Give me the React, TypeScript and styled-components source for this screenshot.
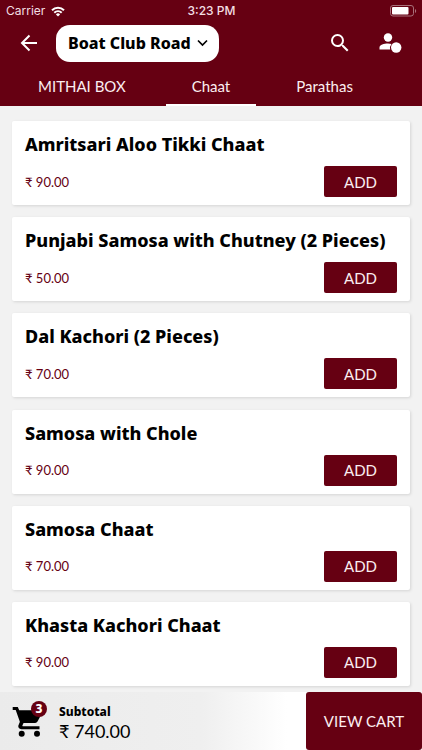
import React from "react";
import styled, { createGlobalStyle } from "styled-components";

const maroon = "#660012";
const textFont = '"Lato", "Open Sans", sans-serif';
const boldFont = '"Noto Sans", "Open Sans", sans-serif';

const GlobalStyle = createGlobalStyle`
  *, *::before, *::after { box-sizing: border-box; }
  body { margin: 0; background: #f2f2f2; font-family: ${textFont}; color: #000; }
  button { font: inherit; border: 0; padding: 0; cursor: pointer; }
  svg { display: block; }
`;

const Screen = styled.div`
  min-height: 100vh;
  display: flex;
  flex-direction: column;
`;

const Header = styled.header`
  position: sticky;
  top: 0;
  z-index: 1;
  background: ${maroon};
  color: #fff;
`;

const StatusBar = styled.div`
  display: grid;
  grid-template-columns: 1fr auto 1fr;
  align-items: center;
  height: 20px;
  padding: 2px 5px 0 6px;
  font: 400 12px/18px "Inter", sans-serif;
  color: #f3dfe2;
`;

const Carrier = styled.span`
  display: flex;
  align-items: center;
  gap: 6px;
`;

const Clock = styled.time`
  font-weight: 500;
`;

const Battery = styled.span`
  justify-self: end;
`;

const Toolbar = styled.div`
  display: flex;
  align-items: center;
  height: 46px;
  padding: 0 20px;
`;

const IconButton = styled.button`
  background: none;
  color: #fff;
`;

const Actions = styled.div`
  display: flex;
  gap: 26px;
  margin-left: auto;
`;

const LocationButton = styled.button`
  display: flex;
  align-items: center;
  gap: 6px;
  height: 37px;
  margin-left: 18px;
  && { padding: 0 11px 0 12px; }
  border-radius: 14px;
  background: #fff;
  color: #000;
  font: 800 16px/20px ${boldFont};
  white-space: nowrap;
`;

const Tabs = styled.nav`
  display: flex;
  gap: 14px;
  height: 40px;
  padding-left: 12px;
  overflow: hidden;
`;

const Tab = styled.button<{ $active?: boolean }>`
  && {
    padding: 0 26px;
    border-top: 2px solid transparent;
    border-bottom: 2px solid ${(p) => (p.$active ? "#fff" : "transparent")};
  }
  background: none;
  color: #fbeef0;
  font: 400 15px/20px ${textFont};
  white-space: nowrap;
`;

const Menu = styled.main`
  flex: 1;
  display: flex;
  flex-direction: column;
  justify-content: space-between;
  gap: 12px;
  padding: 15px 12px 6px;
`;

const Card = styled.article`
  padding: 11px 13px 8px;
  border-radius: 2px;
  background: #fff;
  box-shadow: 1px 1px 3px rgba(0, 0, 0, 0.12);
`;

const ItemName = styled.h2`
  margin: 0;
  font: 800 18px/24px ${boldFont};
`;

const CardRow = styled.div`
  display: flex;
  align-items: center;
  justify-content: space-between;
  margin-top: 10px;
`;

const Price = styled.span`
  color: ${maroon};
  font: 400 13px/20px ${textFont};
`;

const AddButton = styled.button`
  width: 73px;
  height: 31px;
  border-radius: 2px;
  background: ${maroon};
  color: #fbeef0;
  font: 400 15px/20px ${textFont};
`;

const CartBar = styled.footer`
  position: sticky;
  bottom: 0;
  display: flex;
  align-items: center;
  height: 58px;
  padding-left: 12px;
  background: linear-gradient(90deg, #ebebeb 0%, #efefef 48%, #fff 68%);
`;

const CartIcon = styled.div`
  position: relative;
  width: 32px;
`;

const Badge = styled.span`
  position: absolute;
  top: -4px;
  right: -3px;
  width: 16px;
  height: 16px;
  border-radius: 50%;
  background: ${maroon};
  color: #fff;
  font: 800 12px/16px ${boldFont};
  text-align: center;
`;

const Totals = styled.div`
  display: flex;
  flex-direction: column;
  padding-top: 2px;
  margin-left: 15px;
`;

const TotalLabel = styled.div`
  font: 800 12px/17px ${boldFont};
`;

const Total = styled.div`
  font: 400 18px/22px ${textFont};
`;

const ViewCart = styled.button`
  align-self: stretch;
  width: 116px;
  margin-left: auto;
  border-radius: 3px;
  background: ${maroon};
  color: #fbeef0;
  font: 400 15px/20px ${textFont};
`;

const items = [
  { name: "Amritsari Aloo Tikki Chaat", price: "90.00" },
  { name: "Punjabi Samosa with Chutney (2 Pieces)", price: "50.00" },
  { name: "Dal Kachori (2 Pieces)", price: "70.00" },
  { name: "Samosa with Chole", price: "90.00" },
  { name: "Samosa Chaat", price: "70.00" },
  { name: "Khasta Kachori Chaat", price: "90.00" },
];

export default function App() {
  return (
    <>
      <GlobalStyle />
      <Screen>
        <Header>
          <StatusBar>
            <Carrier>
              Carrier
              <svg width="14" height="11" viewBox="0 0 14 11" fill="none" stroke="#fff" strokeWidth="2">
                <path d="M1 4.2a8.6 8.6 0 0 1 12 0M3.3 6.7a5.3 5.3 0 0 1 7.4 0" />
                <path d="M7 10.5 4.9 8.4a3 3 0 0 1 4.2 0z" fill="#fff" stroke="none" />
              </svg>
            </Carrier>
            <Clock>3:23 PM</Clock>
            <Battery>
              <svg width="27" height="12" viewBox="0 0 27 12">
                <rect x="0.5" y="0.5" width="23" height="10.5" rx="2.5" fill="none" stroke="#a8707a" />
                <rect x="2" y="2" width="16.5" height="7.5" rx="1" fill="#fff" />
                <path d="M25 4v4c1.6-.7 1.6-3.3 0-4z" fill="#a8707a" />
              </svg>
            </Battery>
          </StatusBar>
          <Toolbar>
            <IconButton aria-label="Back">
              <svg width="18" height="18" viewBox="0 0 18 18" fill="none" stroke="currentColor" strokeWidth="2">
                <path d="M17 9H2.5M9.5 1.5 2 9l7.5 7.5" />
              </svg>
            </IconButton>
            <LocationButton>
              Boat Club Road
              <svg width="11" height="8" viewBox="0 0 11 8" fill="none" stroke="#000" strokeWidth="1.7">
                <path d="M1 1.5 5.5 6 10 1.5" />
              </svg>
            </LocationButton>
            <Actions>
              <IconButton aria-label="Search">
                <svg width="24" height="24" viewBox="0 0 24 24" fill="currentColor">
                  <path d="M15.5 14h-.79l-.28-.27A6.47 6.47 0 0 0 16 9.5 6.5 6.5 0 1 0 9.5 16c1.61 0 3.09-.59 4.23-1.57l.27.28v.79l5 4.99L20.49 19l-4.99-5zm-6 0a4.5 4.5 0 1 1 0-9 4.5 4.5 0 0 1 0 9z" />
                </svg>
              </IconButton>
              <IconButton aria-label="Account">
                <svg width="24" height="24" viewBox="0 0 24 24" fill="currentColor">
                  <circle cx="10" cy="6.5" r="4.2" />
                  <path d="M1.5 18.5v-2C1.5 13.8 6 12.5 10 12.5c1.5 0 2.5.2 3.5.5a6.2 6.2 0 0 0-1.3 5.5z" />
                  <circle cx="18.2" cy="16.5" r="5.2" />
                </svg>
              </IconButton>
            </Actions>
          </Toolbar>
          <Tabs>
            <Tab>MITHAI BOX</Tab>
            <Tab $active aria-current="page">Chaat</Tab>
            <Tab>Parathas</Tab>
          </Tabs>
        </Header>
        <Menu>
          {items.map((item) => (
            <Card key={item.name}>
              <ItemName>{item.name}</ItemName>
              <CardRow>
                <Price>₹ {item.price}</Price>
                <AddButton aria-label={`ADD ${item.name}`}>ADD</AddButton>
              </CardRow>
            </Card>
          ))}
        </Menu>
        <CartBar>
          <CartIcon>
            <svg width="32" height="32" viewBox="0 0 32 32" fill="#000">
              <path d="M.7 2h5.1l1.4 3.2H29.5c1.1 0 1.7 1 1.2 1.9l-5.2 9.5c-.5.9-1.3 1.4-2.3 1.4H8.3L3.7 5.1H.7z" />
              <path d="M8 16.5 12 17l-1.6 3.5c-.2.4 0 .7.4.7H27.5v3H9.5c-2.5 0-4-2.3-2.8-4.4z" />
              <circle cx="9.7" cy="28.8" r="3" />
              <circle cx="25" cy="28.8" r="3" />
            </svg>
            <Badge>3</Badge>
          </CartIcon>
          <Totals>
            <TotalLabel>Subtotal</TotalLabel>
            <Total>₹ 740.00</Total>
          </Totals>
          <ViewCart>VIEW CART</ViewCart>
        </CartBar>
      </Screen>
    </>
  );
}
